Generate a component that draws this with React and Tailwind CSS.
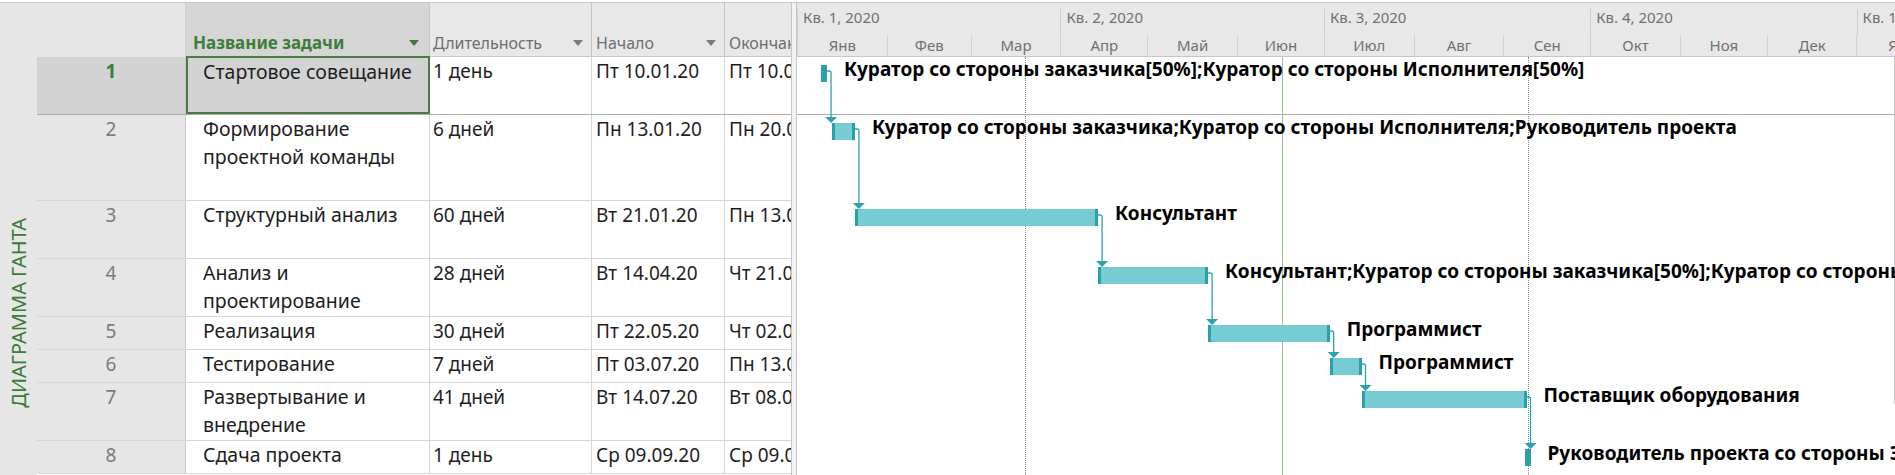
import React from 'react';

// пикселей на день шкалы времени
const DAY = 2.895;

const tasks = [
    { n: 1, name: ['Стартовое совещание'], dur: '1 день', start: 'Пт 10.01.20', end: 'Пт 10.01.20', h: 58, s: 9, e: 10, res: 'Куратор со стороны заказчика[50%];Куратор со стороны Исполнителя[50%]' },
    { n: 2, name: ['Формирование', 'проектной команды'], dur: '6 дней', start: 'Пн 13.01.20', end: 'Пн 20.01.20', h: 86, s: 12, e: 20, res: 'Куратор со стороны заказчика;Куратор со стороны Исполнителя;Руководитель проекта' },
    { n: 3, name: ['Структурный анализ'], dur: '60 дней', start: 'Вт 21.01.20', end: 'Пн 13.04.20', h: 58, s: 20, e: 104, res: 'Консультант' },
    { n: 4, name: ['Анализ и', 'проектирование'], dur: '28 дней', start: 'Вт 14.04.20', end: 'Чт 21.05.20', h: 58, s: 104, e: 142, res: 'Консультант;Куратор со стороны заказчика[50%];Куратор со стороны Исполнителя[50%]' },
    { n: 5, name: ['Реализация'], dur: '30 дней', start: 'Пт 22.05.20', end: 'Чт 02.07.20', h: 33, s: 142, e: 184, res: 'Программист' },
    { n: 6, name: ['Тестирование'], dur: '7 дней', start: 'Пт 03.07.20', end: 'Пн 13.07.20', h: 33, s: 184, e: 195, res: 'Программист' },
    { n: 7, name: ['Развертывание и', 'внедрение'], dur: '41 дней', start: 'Вт 14.07.20', end: 'Вт 08.09.20', h: 58, s: 195, e: 252, res: 'Поставщик оборудования' },
    { n: 8, name: ['Сдача проекта'], dur: '1 день', start: 'Ср 09.09.20', end: 'Ср 09.09.20', h: 33, s: 252, e: 253, res: 'Руководитель проекта со стороны Заказчика' },
];

const quarters = [
    { label: 'Кв. 1, 2020', days: 91 },
    { label: 'Кв. 2, 2020', days: 91 },
    { label: 'Кв. 3, 2020', days: 92 },
    { label: 'Кв. 4, 2020', days: 92 },
    { label: 'Кв. 1, 2021', days: 90 },
];

const months = [
    ['Янв', 31], ['Фев', 29], ['Мар', 31], ['Апр', 30], ['Май', 31], ['Июн', 30],
    ['Июл', 31], ['Авг', 31], ['Сен', 30], ['Окт', 31], ['Ноя', 30], ['Дек', 31], ['Янв', 31],
];

// геометрия полосок
const rowTops = [];
tasks.reduce((acc, t) => { rowTops.push(acc); return acc + t.h; }, 0);
const bars = tasks.map((t, i) => {
    const short = t.e - t.s <= 1;
    const left = short ? t.s * DAY - 2 : t.s * DAY;
    const width = short ? 6 : (t.e - t.s) * DAY;
    return { left, width, short, top: rowTops[i] + 8 };
});

const Arrow = ({ color }) => (
    <svg width="10" height="6" viewBox="0 0 10 6" className="shrink-0">
        <polygon points="0,0 10,0 5,6" fill={color} />
    </svg>
);

const App = () => {
    return (
        <div className="w-[1895px] h-[475px] overflow-hidden bg-white pt-[2px] font-['Noto_Sans',sans-serif]">
            <div className="flex h-full border-t border-[#c6c6c6]">
                {/* вертикальная подпись вида */}
                <div className="w-[37px] shrink-0 bg-[#e6e6e6] flex items-start justify-center pt-[215px]">
                    <span className="[writing-mode:vertical-rl] rotate-180 text-[20px] leading-none text-[#3a7a35] whitespace-nowrap">ДИАГРАММА ГАНТА</span>
                </div>

                {/* таблица */}
                <div className="w-[755px] shrink-0 overflow-hidden border-r border-[#c6c6c6]">
                    <div className="flex h-[54px] text-[16px] leading-[22px] text-[#6e6e6e]">
                        <div className="w-[149px] shrink-0 bg-[#e6e6e6] border-r border-[#d0d0d0]" />
                        <div className="w-[244px] shrink-0 bg-[#d5d5d5] border-r border-b border-[#c6c6c6] flex items-end justify-between pb-[2px] pl-[7px] pr-[10px]">
                            <span className="font-bold text-[17px] text-[#3e7d39]">Название задачи</span>
                            <span className="mb-[8px]"><Arrow color="#3e7d39" /></span>
                        </div>
                        <div className="w-[162px] shrink-0 bg-[#e8e8e8] border-r border-b border-[#c6c6c6] flex items-end justify-between pb-[2px] pl-[3px] pr-[8px]">
                            <span>Длительность</span>
                            <span className="mb-[8px]"><Arrow color="#7a7a7a" /></span>
                        </div>
                        <div className="w-[133px] shrink-0 bg-[#e8e8e8] border-r border-b border-[#c6c6c6] flex items-end justify-between pb-[2px] pl-[4px] pr-[8px]">
                            <span>Начало</span>
                            <span className="mb-[8px]"><Arrow color="#7a7a7a" /></span>
                        </div>
                        <div className="flex-1 bg-[#e8e8e8] border-b border-[#c6c6c6] flex items-end pb-[2px] pl-[4px] whitespace-nowrap overflow-hidden">
                            <span>Окончание</span>
                        </div>
                    </div>

                    {tasks.map((t) => {
                        const sel = t.n === 1;
                        return (
                            <div key={t.n} style={{ height: t.h }} className={`flex text-[19.5px] leading-[28px] text-[#1e1e1e] border-b ${sel ? 'border-[#ababab]' : 'border-[#d6d6d6]'}`}>
                                <div className={`w-[149px] shrink-0 border-r border-[#c8c8c8] text-center text-[19px] ${sel ? 'bg-[#d3d3d3] font-bold text-[#3e7d39]' : 'bg-[#e6e6e6] text-[#7b7b7b]'}`}>{t.n}</div>
                                <div className={`w-[244px] shrink-0 ${sel ? 'bg-[#d3d3d3] border-2 border-[#4b7a45] pl-[15px] -mt-px' : 'border-r border-[#d6d6d6] pl-[17px]'}`}>
                                    {t.name.map((l) => <div key={l} className="whitespace-nowrap">{l}</div>)}
                                </div>
                                <div className="w-[162px] shrink-0 border-r border-[#d6d6d6] pl-[3px] text-[19px]">{t.dur}</div>
                                <div className="w-[133px] shrink-0 border-r border-[#d6d6d6] pl-[4px] text-[19px]">{t.start}</div>
                                <div className="flex-1 pl-[4px] whitespace-nowrap overflow-hidden text-[19px]">{t.end}</div>
                            </div>
                        );
                    })}
                    <div className="h-[10px]" />
                </div>

                {/* разделитель */}
                <div className="w-[5px] shrink-0 bg-[#f2f2f2] border-r border-[#c6c6c6]" />

                {/* диаграмма */}
                <div className="flex-1 min-w-0 flex flex-col overflow-hidden">
                    <div className="h-[54px] shrink-0 bg-[#e8e8e8] border-b border-[#c6c6c6] text-[15px] text-[#707070] whitespace-nowrap">
                        <div className="flex items-end h-[32px]">
                            {quarters.map((q) => (
                                <div key={q.label} style={{ width: q.days * DAY }} className="shrink-0 h-[26px] border-l border-[#cfcfcf] pl-[5px] leading-[16px]">{q.label}</div>
                            ))}
                        </div>
                        <div className="flex h-[21px]">
                            {months.map(([m, d], i) => (
                                <div key={i} style={{ width: d * DAY }} className="shrink-0 border-l border-[#d2d2d2] text-center leading-[20px]">{m}</div>
                            ))}
                        </div>
                    </div>

                    <div className="relative flex-1">
                        {/* вертикальные линии */}
                        <div className="absolute top-0 bottom-0 left-[228px] border-l border-dotted border-[#8a8a8a]" />
                        <div className="absolute top-0 bottom-0 left-[731px] border-l border-dotted border-[#8a8a8a]" />
                        <div className="absolute top-0 bottom-0 left-[485px] w-px bg-[#93c493]" />
                        <div className="absolute top-0 right-0 h-[347px] w-px bg-[#c8c8c8]" />

                        {tasks.map((t, i) => {
                            const b = bars[i];
                            return (
                                <div key={t.n} style={{ height: t.h }} className={`relative ${t.n === 1 ? 'border-b border-[#ababab]' : ''}`}>
                                    <div
                                        style={{ left: b.left, width: b.width }}
                                        className={`absolute top-[8px] h-[17px] ${b.short ? 'bg-[#2aa0aa]' : 'bg-[#77cbd2] border-x-[3px] border-[#2aa0aa]'}`}
                                    />
                                    <div
                                        style={{ left: b.left + b.width + 17 }}
                                        className="absolute -top-px whitespace-nowrap text-[19px] leading-[26px] font-bold text-black"
                                    >
                                        {t.res}
                                    </div>
                                </div>
                            );
                        })}

                        {/* связи между задачами */}
                        <svg className="absolute inset-0 pointer-events-none" width="1098" height="420">
                            {bars.slice(0, -1).map((b, i) => {
                                const nb = bars[i + 1];
                                const x1 = b.left + b.width;
                                const y1 = b.top + 6;
                                const xv = x1 + 4;
                                const y2 = nb.top - 6;
                                return (
                                    <g key={i}>
                                        <path d={`M ${x1} ${y1} H ${xv - 2} Q ${xv} ${y1} ${xv} ${y1 + 2} V ${y2}`} fill="none" stroke="#2aa3ad" strokeWidth="1.3" />
                                        <polygon points={`${xv - 6},${y2} ${xv + 6},${y2} ${xv},${nb.top}`} fill="#2aa3ad" />
                                    </g>
                                );
                            })}
                        </svg>
                    </div>
                </div>
            </div>
        </div>
    );
};

export default App;
